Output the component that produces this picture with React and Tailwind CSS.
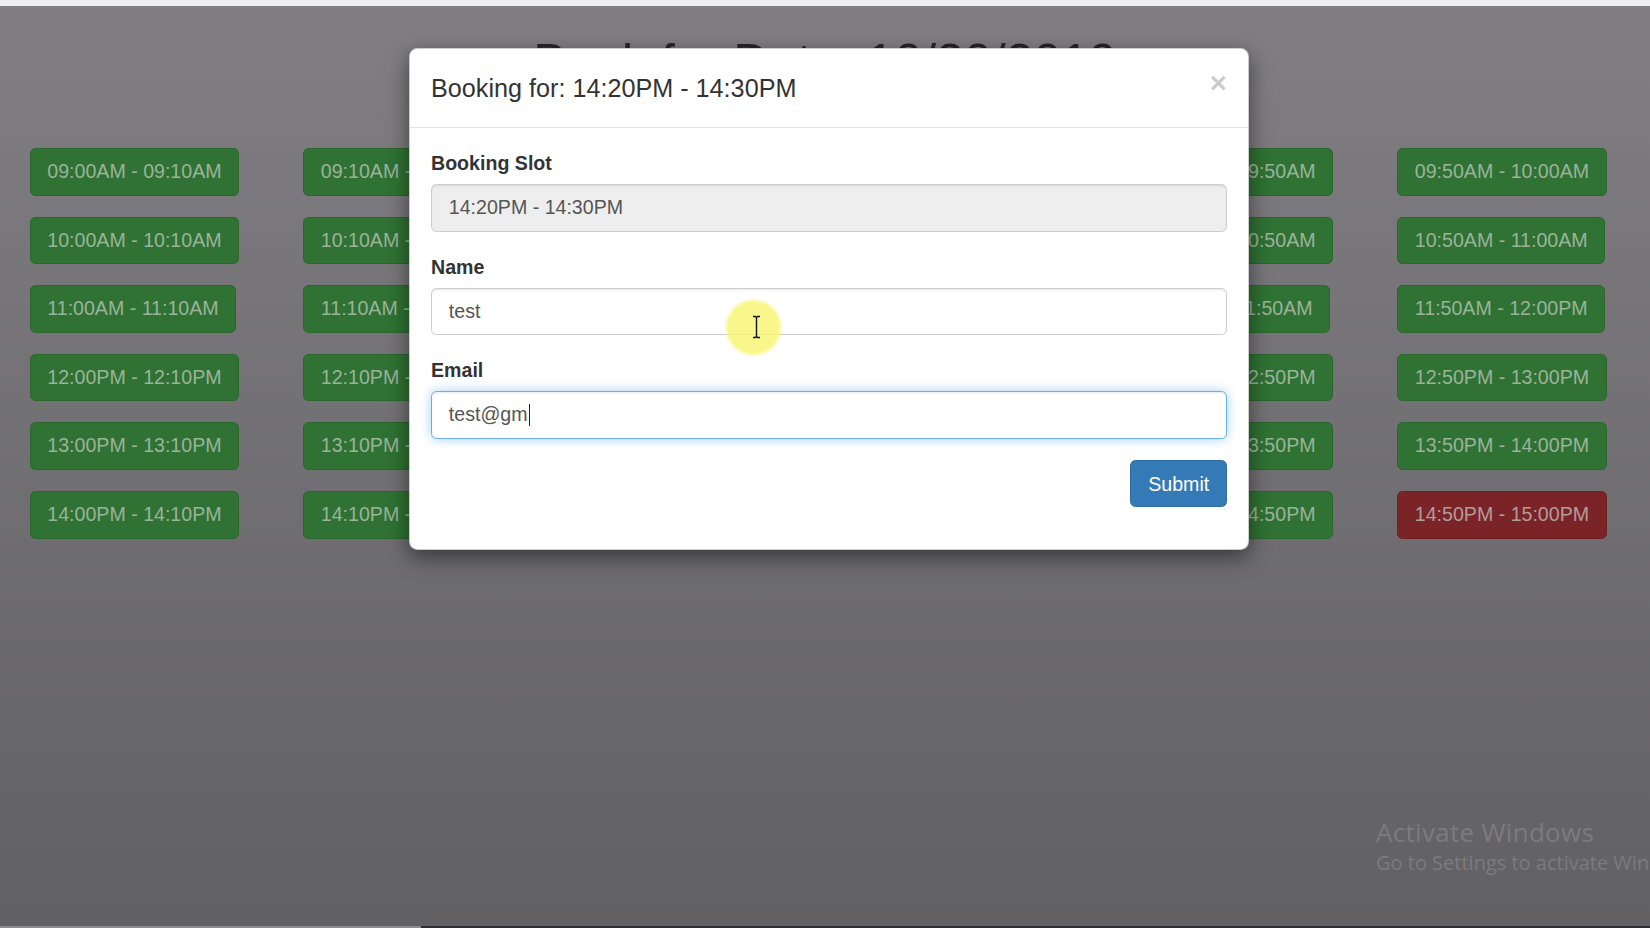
import React from "react";

const fmt = (h, m) => {
  const hh = String(h).padStart(2, "0");
  const mm = String(m).padStart(2, "0");
  return `${hh}:${mm}${h < 12 ? "AM" : "PM"}`;
};

const slots = [];
for (let h = 9; h <= 14; h++) {
  for (let c = 0; c < 6; c++) {
    const start = fmt(h, c * 10);
    const end = c === 5 ? fmt(h + 1, 0) : fmt(h, c * 10 + 10);
    slots.push({ label: `${start} - ${end}`, booked: h === 14 && c === 5 });
  }
}

function Field({ label, children }) {
  return (
    <div className="mb-[21px]">
      <label className="block mb-[7px] text-[19.6px] leading-[28px] font-bold text-[#333]">{label}</label>
      {children}
    </div>
  );
}

export default function App() {
  return (
    <div
      className="relative w-[1650px] h-[928px] overflow-hidden bg-gradient-to-b from-[#817f83] to-[#616063]"
      style={{ fontFamily: '"Liberation Sans", Arial, Helvetica, sans-serif' }}
    >
      <div className="h-[6px] bg-[#efefef]" />

      <h1 className="mt-[29px] h-[55px] text-center text-[50px] leading-[55px] font-normal text-[#252427]">
        Book for Date: 10/30/2019
      </h1>

      <div className="mt-[58px] pl-[29.5px] grid grid-cols-[repeat(6,273.5px)] gap-y-[21px]">
        {slots.map((s, i) => (
          <div key={i} className="justify-self-start">
            <div
              className={
                s.booked
                  ? "h-[47.6px] px-[16.8px] flex items-center rounded-[5.6px] border-[1.4px] border-[#70201f] bg-[#7b2427] text-[#b39a9c] text-[19.6px] whitespace-nowrap"
                  : "h-[47.6px] px-[16.8px] flex items-center rounded-[5.6px] border-[1.4px] border-[#2b662d] bg-[#2f7233] text-[#9bb29b] text-[19.6px] whitespace-nowrap"
              }
            >
              {s.label}
            </div>
          </div>
        ))}
      </div>

      {/* Windows watermark */}
      <div className="absolute left-[1376px] top-[815px] whitespace-nowrap text-[#7c7b7e]" style={{ fontFamily: '"Open Sans", "Noto Sans", sans-serif' }}>
        <div className="text-[26px] leading-[34px] tracking-[0.3px]">Activate Windows</div>
        <div className="text-[20px] leading-[26px] mt-[1px]">Go to Settings to activate Windows.</div>
      </div>

      {/* bottom strip */}
      <div className="absolute left-0 bottom-0 w-full h-[2px] flex">
        <div className="w-[421px] bg-[#8d8c8f]" />
        <div className="flex-1 bg-[#2c2f36]" />
      </div>

      {/* Modal */}
      <div className="absolute left-[409px] top-[48px] w-[840px] bg-white rounded-[8.4px] border border-[rgba(0,0,0,0.2)] shadow-[0_7px_21px_rgba(0,0,0,0.5)]">
        <div className="px-[21px] py-[21px] border-b border-[#e5e5e5] flex justify-between items-start">
          <div className="text-[25.2px] leading-[36px] text-[#333]">Booking for: 14:20PM - 14:30PM</div>
          <div className="text-[29.4px] font-bold leading-none text-black opacity-20 -mt-[2px]">×</div>
        </div>
        <div className="p-[21px]">
          <Field label="Booking Slot">
            <div className="h-[47.6px] px-[16.8px] flex items-center rounded-[5.6px] border-[1.4px] border-[#ccc] bg-[#eee] text-[19.6px] text-[#555] shadow-[inset_0_1.4px_1.4px_rgba(0,0,0,0.075)]">
              14:20PM - 14:30PM
            </div>
          </Field>
          <Field label="Name">
            <div className="relative h-[47.6px] px-[16.8px] flex items-center rounded-[5.6px] border-[1.4px] border-[#ccc] bg-white text-[19.6px] text-[#555] shadow-[inset_0_1.4px_1.4px_rgba(0,0,0,0.075)]">
              test
            </div>
          </Field>
          <Field label="Email">
            <div className="h-[47.6px] px-[16.8px] flex items-center rounded-[5.6px] border-[1.4px] border-[#66afe9] bg-white text-[19.6px] text-[#555] shadow-[inset_0_1.4px_1.4px_rgba(0,0,0,0.075),0_0_11px_rgba(102,175,233,0.6)]">
              test@gm
              <span className="inline-block w-[1.5px] h-[22px] bg-[#222] ml-[1px]" />
            </div>
          </Field>
          <div className="mb-[21px] flex justify-end">
            <button className="h-[47.6px] px-[16.8px] rounded-[5.6px] border-[1.4px] border-[#2e6da4] bg-[#337ab7] text-white text-[19.6px] leading-[28px]">
              Submit
            </button>
          </div>
        </div>
      </div>

      {/* cursor highlight */}
      <div className="absolute left-[726px] top-[300px] w-[55px] h-[55px] rounded-full bg-[rgba(247,245,110,0.8)] blur-[1.5px]" />
      <svg className="absolute left-[752px] top-[315px]" width="9" height="24" viewBox="0 0 9 24">
        <path d="M1 1.5h2.5L4.5 2.5L5.5 1.5H8M4.5 2.5V21.5M1 22.5h2.5L4.5 21.5L5.5 22.5H8" fill="none" stroke="#111" strokeWidth="1.4" />
      </svg>
    </div>
  );
}
